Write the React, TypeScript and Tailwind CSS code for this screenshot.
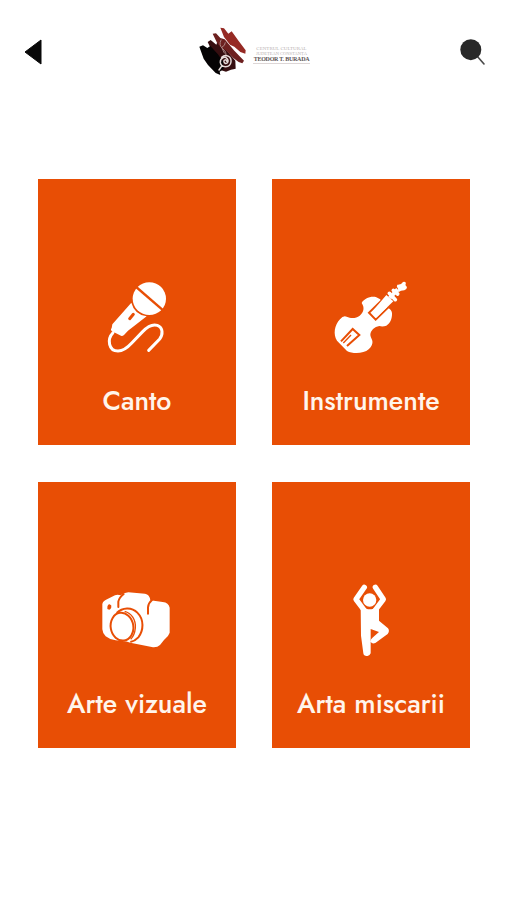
import type { ReactNode } from "react";

type Category = {
  name: string;
  icon: ReactNode;
};

const categories: Category[] = [
  {
    name: "Canto",
    icon: (
      <svg className="w-[85px] h-[95px]" viewBox="-1 -1 255 285" fill="none">
        <ellipse cx="162" cy="85" rx="50" ry="49" fill="#fff" />
        <path d="M119 47L207 123" stroke="#e84e05" strokeWidth="7" />
        <path
          d="M108 97Q117 132 154 138L98 181L86 194Q80 200 74 195L50 183Q44 179 49 173L51 162Z"
          fill="#fff"
        />
        <path d="M103 145L114 132" stroke="#e84e05" strokeWidth="9" strokeLinecap="round" />
        <path
          d="M53 187C34 207 40 242 68 242C86 242 98 230 110 217L142 184C155 170 169 160 186 165C204 172 203 193 193 206L160 240"
          stroke="#fff"
          strokeWidth="9"
          strokeLinecap="round"
        />
      </svg>
    ),
  },
  {
    name: "Instrumente",
    icon: (
      <svg className="w-[85px] h-[95px]" viewBox="12 0 255 285" fill="none">
        <path
          d="M110 99C117 86 138 77 154 82Q165 86 173 95L188 113Q200 119 201 129C202 148 194 161 184 167Q173 171 163 168C149 170 136 182 136 195Q137 203 141 209C145 219 140 230 131 238C117 251 84 253 66 243L36 212C24 194 28 165 45 148Q55 135 65 140C80 147 94 144 104 137C117 126 119 112 110 99Z"
          fill="#fff"
        />
        <path d="M172 89L132 128L152 149L190 112" stroke="#e84e05" strokeWidth="6" />
        <path d="M184 75L205 94L154 143L145 134L143 128L139 127L145 121Z" fill="#fff" />
        <path d="M205 61L218 72M193 70L211 89" stroke="#fff" strokeWidth="11" strokeLinecap="round" />
        <path d="M218 58L194 84" stroke="#fff" strokeWidth="12" />
        <path d="M217 44Q229 45 234 36Q239 33 243 39Q239 46 246 51Q246 58 238 61L228 62L220 67L219 56Q213 49 217 44Z" fill="#fff" />
        <path d="M48 214L83 177L103 195L66 228" stroke="#e84e05" strokeWidth="6" />
        <path d="M55 219L78 195" stroke="#e84e05" strokeWidth="4" />
      </svg>
    ),
  },
  {
    name: "Arte vizuale",
    icon: (
      <svg className="w-[85px] h-[95px]" viewBox="1 -21 255 285" fill="none">
        <path
          d="M23 72Q25 63 37 58L61 46Q68 43 78 46Q86 38 101 37L151 41Q165 43 167 61L204 66Q222 68 225 83V158Q222 169 208 180L196 195Q188 203 175 202L107 188Q96 184 83 183Q61 182 47 177L33 169Q24 161 23 148Z"
          fill="#fff"
        />
        <path
          d="M71 81V65Q73 53 87 42M160 101V82Q161 69 172 60"
          stroke="#e84e05"
          strokeWidth="6"
          strokeLinecap="round"
        />
        <ellipse cx="44" cy="81" rx="6" ry="8" fill="#e84e05" transform="rotate(15 44 81)" />
        <path
          d="M66 99C83 82 111 80 128 98C149 119 147 151 131 172Q121 183 107 186"
          stroke="#e84e05"
          strokeWidth="6"
        />
        <path d="M90 94C110 99 124 119 122 144Q120 166 108 178" stroke="#e84e05" strokeWidth="4" />
        <ellipse cx="82" cy="140" rx="34" ry="42" fill="#fff" stroke="#e84e05" strokeWidth="6" transform="rotate(-9 82 140)" />
      </svg>
    ),
  },
  {
    name: "Arta miscarii",
    icon: (
      <svg className="w-[85px] h-[95px]" viewBox="-18 -6 255 285" fill="none">
        <circle cx="104" cy="75" r="20" fill="#fff" />
        <path
          d="M88 37L63 73L87 105M121 37L145 73L121 105"
          stroke="#fff"
          strokeWidth="16"
          strokeLinecap="round"
          strokeLinejoin="round"
        />
        <path
          d="M77 91L94 101Q104 105 115 101L132 91V137L159 160Q165 168 158 177L121 204Q111 208 107 200Q106 192 114 187L132 171L107 162V235Q103 245 95 243Q86 243 85 235L78 182Z"
          fill="#fff"
        />
      </svg>
    ),
  },
];

function Logo() {
  return (
    <div className="flex items-center -ml-[2px]">
      <svg className="w-16 h-16" viewBox="0 2 192 192" fill="none">
        {/* brush strokes */}
        <path d="M50 68L59 62L76 76L80 66L106 92L133 124L134 148L120 151L105 157L88 152L70 110Z" fill="#360e10" />
        <path d="M65 43L75 42L88 56L101 60L130 94L159 124L154 132L143 128L127 116L106 94L87 82L78 70Z" fill="#6d201f" />
        <path d="M88 25L99 27L112 43L122 36L143 65L164 93L163 103L148 98L130 82L117 76L99 53Z" fill="#962a24" />
        <path d="M25 82L36 78L49 86L58 80L80 104L96 126L98 149L86 157L88 167L74 161L51 137L38 118Z" fill="#050304" />
        {/* violin scroll */}
        <path
          d="M90 62Q82 77 95 88Q109 99 104 113M103 70Q103 79 92 84L100 101"
          stroke="#a98583"
          strokeWidth="3"
          strokeLinecap="round"
        />
        <path
          d="M92 114C104 103 122 111 120 128C117 147 91 146 88 130C87 115 102 109 109 119C117 130 101 138 99 127C98 120 107 120 107 126M93 139L84 152"
          stroke="#e7dcda"
          strokeWidth="4.5"
          strokeLinecap="round"
        />
      </svg>
      <div className="w-[57px] -ml-[2px] mt-[5px] flex flex-col items-center font-['Liberation_Serif',serif] whitespace-nowrap text-[#b9b3b3]">
        <span className="text-[5px] leading-[5px]">CENTRUL CULTURAL</span>
        <span className="text-[4.5px] leading-[5px]">JUDEȚEAN CONSTANȚA</span>
        <span className="text-[6px] leading-[7px] font-bold tracking-[-0.25px] text-[#5c5555]">TEODOR T. BURADA</span>
        <span className="w-full h-px bg-[#ddd6d6]" />
      </div>
    </div>
  );
}

function Header() {
  return (
    <header className="flex items-start justify-between pl-6 pr-[20px] pt-5">
      <button className="mt-[18px] w-5 h-7" aria-label="Înapoi">
        <svg className="w-5 h-7" viewBox="0 0 20 28">
          <path d="M17 2V26L1 14Z" fill="#080808" stroke="#080808" strokeLinejoin="round" />
        </svg>
      </button>
      <Logo />
      <button className="mt-[18px] w-7 h-7" aria-label="Caută">
        <svg className="w-7 h-7" viewBox="0 0 28 28">
          <path d="M18 18L25 26" stroke="#4a4a4a" strokeWidth="1.6" strokeLinecap="round" />
          <circle cx="11.8" cy="11.7" r="10.5" fill="#292929" />
        </svg>
      </button>
    </header>
  );
}

function CategoryCard({ name, icon }: Category) {
  return (
    <a className="h-[266px] bg-[#e84e05] flex flex-col items-center pt-[91px]">
      {icon}
      <span className="mt-[18px] text-[26.8px] leading-9 font-medium text-[#fff5ec] whitespace-nowrap">
        {name}
      </span>
    </a>
  );
}

export default function App() {
  return (
    <div className="w-[507px] h-[900px] bg-white font-['Jost',Lato,sans-serif]">
      <Header />
      <main className="mt-[95px] ml-[38px] w-[432px] grid grid-cols-2 gap-x-9 gap-y-[37px]">
        {categories.map((category) => (
          <CategoryCard key={category.name} {...category} />
        ))}
      </main>
    </div>
  );
}
